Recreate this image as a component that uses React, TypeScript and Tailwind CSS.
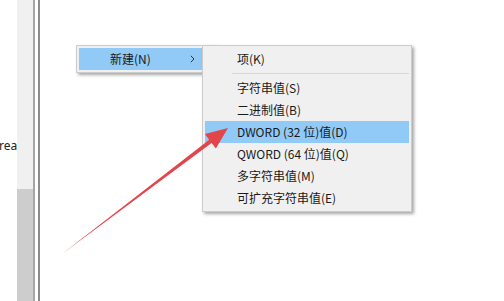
import React from "react";

const font = { fontFamily: '"Noto Sans CJK SC", "Noto Sans", sans-serif' };

function Item({ label, active }: { label: string; active?: boolean }) {
  return (
    <div
      className={`flex h-[22px] items-center pl-[32px] text-[12px] leading-none text-[#1a1a1a] ${
        active ? "bg-[#91c9f7]" : ""
      }`}
    >
      {label}
    </div>
  );
}

export default function App() {
  return (
    <div className="relative flex h-[301px] w-[504px] overflow-hidden bg-white" style={font}>
      {/* left clipped pane */}
      <div className="w-[17px] overflow-hidden pt-[139px]">
        <div className="-ml-[1px] whitespace-nowrap text-[12px] leading-[14px] text-[#222]" style={{ fontFamily: '"Noto Sans", sans-serif' }}>
          rea
        </div>
      </div>
      {/* scrollbar */}
      <div className="flex w-[16px] flex-col bg-[#f0f0f0]">
        <div className="h-[189px]" />
        <div className="flex-1 bg-[#cdcdcd]" />
      </div>
      <div className="w-[2px] bg-[#a6a6a6]" />
      <div className="w-[3px] bg-white" />
      <div className="w-[1.5px] bg-[#8c8c8c]" />
      <div className="flex-1" />

      {/* first context menu */}
      <div className="absolute left-[76px] top-[45px] w-[140px] border border-[#cccccc] bg-[#f0f0f0] p-[2px] shadow-[2px_2px_3px_rgba(0,0,0,0.35)]">
        <div className="flex h-[22px] items-center bg-[#91c9f7] pl-[31px] text-[12px] leading-none text-[#1a1a1a]">
          <span>新建(N)</span>
          <svg className="ml-[39px]" width="5" height="8" viewBox="0 0 5 8">
            <path d="M0.8 0.8 L4 4 L0.8 7.2" fill="none" stroke="#333" strokeWidth="1" />
          </svg>
        </div>
      </div>

      {/* submenu */}
      <div className="absolute left-[202px] top-[45px] w-[210px] border border-[#cccccc] bg-[#f0f0f0] p-[2px] shadow-[2px_2px_3px_rgba(0,0,0,0.35)]">
        <Item label="项(K)" />
        <div className="flex h-[7px] items-center pl-[27px]">
          <div className="h-[1px] w-full bg-[#d7d7d7]" />
        </div>
        <Item label="字符串值(S)" />
        <Item label="二进制值(B)" />
        <Item label="DWORD (32 位)值(D)" active />
        <Item label="QWORD (64 位)值(Q)" />
        <Item label="多字符串值(M)" />
        <Item label="可扩充字符串值(E)" />
      </div>

      {/* red arrow annotation */}
      <svg className="pointer-events-none absolute left-0 top-0" width="504" height="301" viewBox="0 0 504 301">
        <polygon
          points="62,254 209.2,139.7 204.9,134.1 228,128 215.9,148.5 211.6,142.9"
          fill="#e2464b"
        />
      </svg>
    </div>
  );
}
